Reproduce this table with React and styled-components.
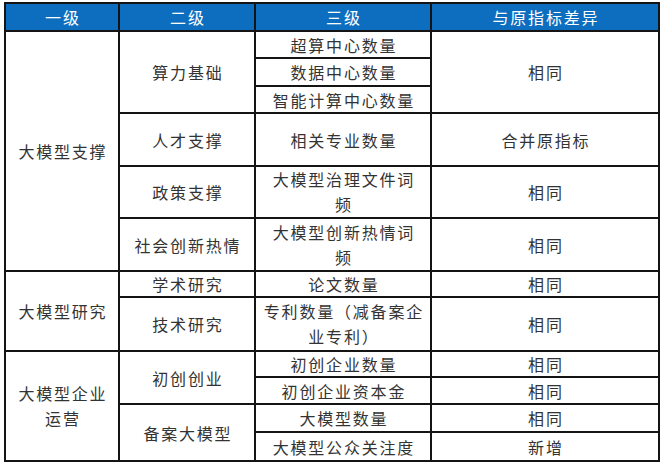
import React from "react";
import styled, { createGlobalStyle } from "styled-components";

const Global = createGlobalStyle`
  html, body { margin: 0; padding: 0; background: #fff; }
  body { font-family: "Noto Sans CJK SC", "Noto Sans", sans-serif; }
`;

const Page = styled.div`
  padding: 2px 0 0 4px;
`;

const Table = styled.table`
  border-collapse: collapse;
  table-layout: fixed;
  width: 654px;
  border: 2px solid #141414;
`;

const Th = styled.th`
  background: #0d6ebf;
  color: #fff;
  font-weight: 400;
  font-size: 16px;
  letter-spacing: 1.8px;
  padding: 0 0 0 1.8px;
  border: 2px solid #141414;
  text-align: center;
  line-height: 20px;
`;

const Td = styled.td`
  border: 2px solid #141414;
  color: #333;
  font-size: 16px;
  letter-spacing: 1.8px;
  padding: 0 0 0 1.8px;
  text-align: center;
  vertical-align: middle;
  line-height: ${(p) => (p.$multi ? 25 : 20)}px;
`;

const Row = styled.tr`
  height: ${(p) => p.$h}px;
`;

const rows = [
  { h: 27, cells: [
    { t: "大模型支撑", rs: 6 },
    { t: "算力基础", rs: 3 },
    { t: "超算中心数量" },
    { t: "相同", rs: 3 },
  ] },
  { h: 28, cells: [{ t: "数据中心数量" }] },
  { h: 27, cells: [{ t: "智能计算中心数量" }] },
  { h: 53, cells: [{ t: "人才支撑" }, { t: "相关专业数量" }, { t: "合并原指标" }] },
  { h: 52, cells: [{ t: "政策支撑" }, { t: ["大模型治理文件词", "频"] }, { t: "相同" }] },
  { h: 53, cells: [{ t: "社会创新热情" }, { t: ["大模型创新热情词", "频"] }, { t: "相同" }] },
  { h: 26, cells: [
    { t: "大模型研究", rs: 2 },
    { t: "学术研究" },
    { t: "论文数量" },
    { t: "相同" },
  ] },
  { h: 54, cells: [{ t: "技术研究" }, { t: ["专利数量（减备案企", "业专利）"] }, { t: "相同" }] },
  { h: 26, cells: [
    { t: ["大模型企业", "运营"], rs: 4 },
    { t: "初创创业", rs: 2 },
    { t: "初创企业数量" },
    { t: "相同" },
  ] },
  { h: 27, cells: [{ t: "初创企业资本金" }, { t: "相同" }] },
  { h: 28, cells: [{ t: "备案大模型", rs: 2 }, { t: "大模型数量" }, { t: "相同" }] },
  { h: 29, cells: [{ t: "大模型公众关注度" }, { t: "新增" }] },
];

const renderText = (t) =>
  Array.isArray(t)
    ? t.map((line, i) => (
        <React.Fragment key={i}>
          {i > 0 && <br />}
          {line}
        </React.Fragment>
      ))
    : t;

export default function App() {
  return (
    <>
      <Global />
      <Page>
        <Table>
          <colgroup>
            <col style={{ width: 114 }} />
            <col style={{ width: 136 }} />
            <col style={{ width: 176 }} />
            <col style={{ width: 228 }} />
          </colgroup>
          <thead>
            <Row $h={28}>
              <Th>一级</Th>
              <Th>二级</Th>
              <Th>三级</Th>
              <Th>与原指标差异</Th>
            </Row>
          </thead>
          <tbody>
            {rows.map((r, i) => (
              <Row key={i} $h={r.h}>
                {r.cells.map((c, j) => (
                  <Td key={j} rowSpan={c.rs || 1} $multi={Array.isArray(c.t)}>
                    {renderText(c.t)}
                  </Td>
                ))}
              </Row>
            ))}
          </tbody>
        </Table>
      </Page>
    </>
  );
}
